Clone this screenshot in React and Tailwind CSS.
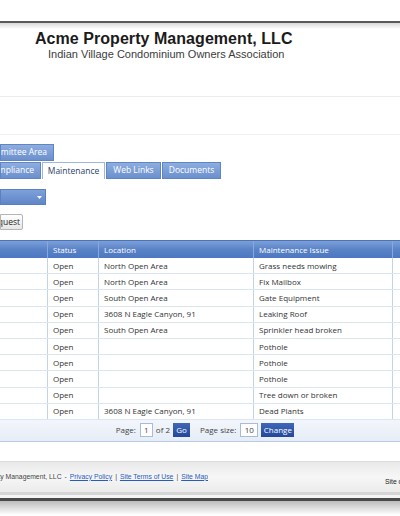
import React from "react";

const rows = [
  ["Open", "North Open Area", "Grass needs mowing"],
  ["Open", "North Open Area", "Fix Mailbox"],
  ["Open", "South Open Area", "Gate Equipment"],
  ["Open", "3608 N Eagle Canyon, 91", "Leaking Roof"],
  ["Open", "South Open Area", "Sprinkler head broken"],
  ["Open", "", "Pothole"],
  ["Open", "", "Pothole"],
  ["Open", "", "Pothole"],
  ["Open", "", "Tree down or broken"],
  ["Open", "3608 N Eagle Canyon, 91", "Dead Plants"],
];

const seg = { fontFamily: '"Open Sans", "Noto Sans", sans-serif' };
const arial = { fontFamily: '"Liberation Sans", Arial, sans-serif' };

function Tab({ children, active, w, clip }) {
  return (
    <div
      className={
        "h-[17px] flex items-center overflow-hidden whitespace-nowrap text-[8.5px] " +
        (clip ? "justify-end pr-[6px] " : "justify-center ") +
        (active
          ? "bg-white text-[#2a3f66] border border-b-0 border-[#9fb6dc]"
          : "bg-gradient-to-b from-[#8eaddf] to-[#6b90cd] text-white border border-[#5f85c4]")
      }
      style={{ width: w }}
    >
      <span>{children}</span>
    </div>
  );
}

export default function App() {
  return (
    <div className="w-[400px] h-[516px] bg-white overflow-hidden flex flex-col" style={seg}>
      {/* top window edge */}
      <div className="h-[21px] bg-white shrink-0" />
      <div className="h-[2px] bg-[#5a5a5a] shrink-0" />
      <div className="h-[6px] bg-gradient-to-b from-[#d8d8d8] to-white shrink-0" />

      {/* masthead */}
      <div className="h-[68px] shrink-0 pl-[35px] pt-[1px] border-b border-[#ececec]">
        <div className="text-[16px] font-bold text-[#1b1b1b] leading-[17px] tracking-[0.05px]" style={arial}>
          Acme Property Management, LLC
        </div>
        <div className="text-[11px] text-[#3c3c3c] leading-[12px] pl-[13px] mt-[1px]" style={arial}>
          Indian Village Condominium Owners Association
        </div>
      </div>

      {/* empty nav band */}
      <div className="h-[38px] shrink-0 border-b border-[#eef0f2]" />

      {/* committee tab */}
      <div className="mt-[9px] shrink-0 flex">
        <Tab w={54} clip>Committee Area</Tab>
      </div>

      {/* tabs */}
      <div className="mt-[1px] shrink-0 flex gap-[1px]">
        <Tab w={41} clip>Compliance</Tab>
        <Tab w={63} active>Maintenance</Tab>
        <Tab w={55}>Web Links</Tab>
        <Tab w={59}>Documents</Tab>
      </div>

      {/* dropdown */}
      <div className="mt-[10px] shrink-0 w-[46px] h-[16px] bg-gradient-to-b from-[#7fa1da] to-[#5f86c8] border border-[#5a80c0] flex items-center justify-end pr-[3px]">
        <svg width="5" height="3" viewBox="0 0 5 3">
          <path d="M0 0H5L2.5 3Z" fill="#fff" />
        </svg>
      </div>

      {/* button */}
      <div className="mt-[9px] shrink-0 flex">
        <div className="w-[23px] h-[16px] bg-gradient-to-b from-white to-[#e6e6e6] border border-[#b5b5b5] rounded-r-[2px] flex items-center justify-end overflow-hidden whitespace-nowrap pr-[2px] text-[8.5px] text-[#222]">
          <span>New Request</span>
        </div>
      </div>

      {/* table */}
      <div className="mt-[10px] shrink-0 w-[400px] text-[8px]">
        <div className="grid grid-cols-[48px_51px_155px_139px_1fr] h-[18px] bg-gradient-to-b from-[#7c9fd9] via-[#5a83c7] to-[#4b78c1] text-white border-t border-[#4a74b8]">
          <div className="border-r border-[#8aa8db]" />
          <div className="border-r border-[#8aa8db] flex items-center pl-[5px]">Status</div>
          <div className="border-r border-[#8aa8db] flex items-center pl-[5px]">Location</div>
          <div className="border-r border-[#8aa8db] flex items-center pl-[5px]">Maintenance Issue</div>
          <div />
        </div>
        {rows.map((r, i) => (
          <div
            key={i}
            className="grid grid-cols-[48px_51px_155px_139px_1fr] h-[16.2px] text-[#333] border-b border-[#dce5f2]"
          >
            <div className="border-r border-[#c3d3ea]" />
            <div className="border-r border-[#c3d3ea] flex items-center pl-[5px]">{r[0]}</div>
            <div className="border-r border-[#c3d3ea] flex items-center pl-[5px]">{r[1]}</div>
            <div className="border-r border-[#c3d3ea] flex items-center pl-[5px]">{r[2]}</div>
            <div />
          </div>
        ))}
        {/* pager */}
        <div className="h-[22px] bg-gradient-to-b from-[#f3f6fb] to-[#e6edf7] border-b border-[#b9cbe6] flex items-center justify-center text-[8px] text-[#444] pl-[10px]">
          <span>Page:</span>
          <span className="ml-[4px] w-[13px] h-[14px] bg-white border border-[#a9bbd6] flex items-center justify-center">1</span>
          <span className="ml-[3px]">of 2</span>
          <span className="ml-[3px] w-[17px] h-[14px] bg-gradient-to-b from-[#3f67b8] to-[#24479a] text-white flex items-center justify-center">Go</span>
          <span className="ml-[10px]">Page size:</span>
          <span className="ml-[4px] w-[18px] h-[14px] bg-white border border-[#a9bbd6] flex items-center justify-center">10</span>
          <span className="ml-[3px] w-[33px] h-[14px] bg-gradient-to-b from-[#3f67b8] to-[#24479a] text-white flex items-center justify-center">Change</span>
        </div>
      </div>

      {/* gap */}
      <div className="h-[19px] shrink-0" />

      {/* footer */}
      <div className="h-[31px] shrink-0 bg-gradient-to-b from-[#e9e9e9] via-[#f6f6f6] to-[#ebebeb] border-t border-[#dcdcdc] flex items-start justify-between text-[6.8px]" style={arial}>
        <div className="mt-[10px] text-[#444] whitespace-nowrap flex justify-end overflow-hidden w-[208px]">
          <span className="flex items-center">
            <span>© Acme Property Management, LLC</span>
            <span className="mx-[3px]">-</span>
            <span className="text-[#2a5cc0] underline">Privacy Policy</span>
            <span className="mx-[3px]">|</span>
            <span className="text-[#2a5cc0] underline">Site Terms of Use</span>
            <span className="mx-[3px]">|</span>
            <span className="text-[#2a5cc0] underline">Site Map</span>
          </span>
        </div>
        <div className="mt-[15px] text-[#222] whitespace-nowrap overflow-hidden w-[15px]">Site designed</div>
      </div>
      <div className="h-[3px] shrink-0 bg-[#d5d5d5]" />
      <div className="h-[3px] shrink-0 bg-[#f4f4f4]" />
      <div className="h-[3px] shrink-0 bg-[#4a4a4a]" />
      <div className="h-[14px] shrink-0 bg-gradient-to-b from-[#bdbdbd] to-white" />
      <div className="flex-1 bg-white" />
    </div>
  );
}
